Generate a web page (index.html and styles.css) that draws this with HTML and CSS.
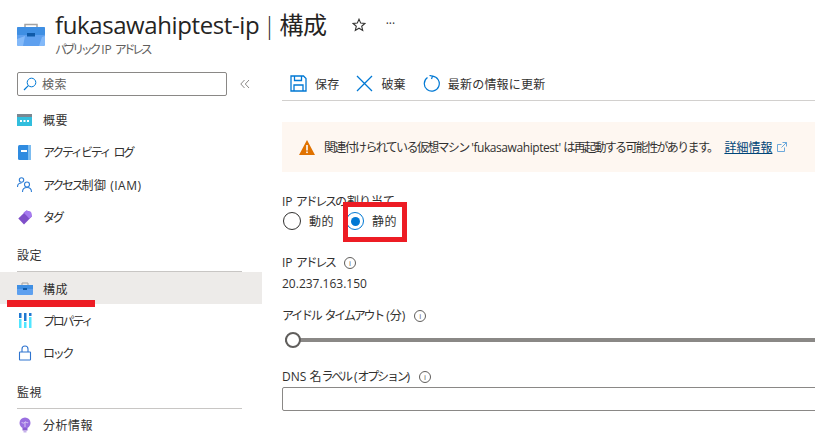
FILE: index.html
```html
<!DOCTYPE html>
<html lang="ja">
<head>
    <meta charset="UTF-8">
    <title>fukasawahiptest-ip | 構成</title>
    <link rel="stylesheet" href="styles.css">
</head>
<body>
    <header class="page-header">
        <svg class="header-icon" width="28" height="24" viewBox="0 0 28 24">
            <path d="M8 6V2.500h12V6" fill="none" stroke="#a3a3a3" stroke-width="1.500"/>
            <rect x="0" y="5" width="28" height="19" rx="1.500" fill="#5ea0ef"/>
            <rect x="0" y="5" width="28" height="8" rx="1" fill="#3f8fe3"/>
            <path d="M0 17l8-3-2 10H1.500L0 22.500zM22 24l3-9 3-1v8.500L26.500 24z" fill="#83b9f9"/>
            <rect x="10" y="11" width="8" height="3.500" fill="#0f5aa8"/>
        </svg>
        <div>
            <h1 class="page-title">fukasawahiptest-ip <span class="title-sep">|</span> <span class="title-jp">構成</span></h1>
            <div class="page-sub"><span class="kana-tight">パブリック</span> IP <span class="kana-tight">アドレス</span></div>
        </div>
        <svg class="star" width="14" height="14" viewBox="0 0 14 14"><path d="M7 1.200l1.700 3.900 4.200.4-3.200 2.800 1 4.100L7 10.200l-3.700 2.200 1-4.100L1.100 5.500l4.200-.4z" fill="none" stroke="#323130" stroke-width="1.100"/></svg>
        <span class="more">···</span>
    </header>

    <div class="layout">
        <nav class="sidebar">
            <div class="search-row">
                <div class="search-box">
                    <svg width="14" height="14" viewBox="0 0 14 14"><circle cx="8.500" cy="5.500" r="4.300" fill="none" stroke="#0078d4" stroke-width="1"/><path d="M5.300 8.700L1 13" stroke="#0078d4" stroke-width="1.200"/></svg>
                    <span>検索</span>
                </div>
                <svg class="collapse" width="10" height="10" viewBox="0 0 10 10"><path d="M4.500 1L.8 5l3.700 4M9 1L5.300 5 9 9" fill="none" stroke="#8a8886" stroke-width="1"/></svg>
            </div>

            <a class="nav-item">
                <svg width="16" height="14" viewBox="0 0 16 14"><rect y="1" width="15" height="12" fill="#32bedd"/><rect y="1" width="15" height="3" fill="#7a8791"/><rect x="3" y="7" width="2" height="2" fill="#fff"/><rect x="6.500" y="7" width="2" height="2" fill="#fff"/><rect x="10" y="7" width="2" height="2" fill="#fff"/></svg>
                <span>概要</span>
            </a>
            <a class="nav-item">
                <svg width="16" height="16" viewBox="0 0 16 16"><rect x="1" y="1" width="13" height="15" rx="1.500" fill="#2f8be0"/><rect x="11" y="1" width="3" height="15" fill="#7cbcf0"/><rect x="4" y="6" width="6" height="2" fill="#fff"/></svg>
                <span class="kana">アクティビティ ログ</span>
            </a>
            <a class="nav-item">
                <svg width="16" height="16" viewBox="0 0 16 16" fill="none" stroke="#2f7fd6" stroke-width="1.100"><circle cx="4.500" cy="3" r="2.200"/><path d="M.5 10c0-3 1.500-4 4-4"/><circle cx="10" cy="7.500" r="2.500"/><path d="M5.500 15c0-3 2-4.500 4.500-4.500s4.500 1.500 4.500 4.500"/></svg>
                <span><span class="kana">アクセス</span>制御 (IAM)</span>
            </a>
            <a class="nav-item">
                <svg width="15" height="15" viewBox="0 0 15 15"><path d="M9 .5l4.500 1.500.8 4.500L6.500 14.500.8 8.500z" fill="#7f4fc9"/><path d="M9 .5l4.500 1.500.8 4.500-2.300 2.300L6 2.500z" fill="#a67af0"/></svg>
                <span class="kana">タグ</span>
            </a>

            <div class="nav-heading">設定</div>
            <a class="nav-item nav-active">
                <svg width="16" height="13" viewBox="0 0 16 13"><path d="M5 3V1h6v2" fill="none" stroke="#a3a3a3"/><rect y="3" width="16" height="10" rx="1" fill="#5ea0ef"/><rect y="3" width="16" height="4" fill="#3f8fe3"/><rect x="6" y="6" width="4" height="2" fill="#0f5aa8"/></svg>
                <span>構成</span>
            </a>
            <a class="nav-item">
                <svg width="14" height="15" viewBox="0 0 14 15"><rect x="1" width="2.500" height="5" fill="#1f78d1"/><rect x="1" y="6" width="2.500" height="9" fill="#50e6ff"/><rect x="6" width="2.500" height="8" fill="#1f78d1"/><rect x="6" y="9" width="2.500" height="6" fill="#50e6ff"/><rect x="11" width="2.500" height="3" fill="#1f78d1"/><rect x="11" y="4" width="2.500" height="11" fill="#50e6ff"/></svg>
                <span class="kana">プロパティ</span>
            </a>
            <a class="nav-item">
                <svg width="14" height="16" viewBox="0 0 14 16" fill="none" stroke="#2f74cf" stroke-width="1.100"><rect x="1.500" y="7" width="11" height="8" rx=".500"/><path d="M4 7V4a3 3 0 0 1 6 0v3"/></svg>
                <span class="kana">ロック</span>
            </a>

            <div class="nav-heading nav-heading-next">監視</div>
            <a class="nav-item">
                <svg width="14" height="16" viewBox="0 0 14 16"><circle cx="7" cy="6" r="5.500" fill="#9a6fe0"/><rect x="4.500" y="11" width="5" height="2.500" fill="#8a5fd0"/><rect x="5.500" y="14" width="3" height="1.500" fill="#c6b1ea"/><path d="M4 5c0 2 3 1 3 0s3 2 3 0M7 5v5" fill="none" stroke="#e6dcf8" stroke-width=".800"/></svg>
                <span>分析情報</span>
            </a>
            <div class="mark-line"></div>
        </nav>

        <main class="content">
            <div class="toolbar">
                <button class="tool">
                    <svg width="17" height="17" viewBox="0 0 17 17" fill="none" stroke="#0078d4" stroke-width="1.300"><path d="M1 1h12.500L16 3.500V16H1z"/><path d="M4.500 1v4.500h7V1M4 16v-6h9v6"/></svg>
                    保存
                </button>
                <button class="tool">
                    <svg width="17" height="17" viewBox="0 0 17 17"><path d="M1 1l15 15M16 1L1 16" stroke="#0078d4" stroke-width="1.300"/></svg>
                    破棄
                </button>
                <button class="tool">
                    <svg width="17" height="17" viewBox="0 0 17 17" fill="none" stroke="#0078d4" stroke-width="1.200"><path d="M4.500 2.500A7.500 7.500 0 1 0 9.500 1.200"/><path d="M6.500.4l3 .8-1 2.800"/></svg>
                    最新の情報に更新
                </button>
            </div>

            <div class="alert">
                <svg width="16" height="15" viewBox="0 0 16 15"><path d="M8 0l8 15H0z" fill="#e07200"/><rect x="7.200" y="5" width="1.600" height="5.500" fill="#fff"/><rect x="7.200" y="11.500" width="1.600" height="1.600" fill="#fff"/></svg>
                <span class="alert-text"><span class="alert-jp">関連付けられている仮想マシン</span> 'fukasawahiptest' <span class="alert-jp">は再起動する可能性があります。</span></span>
                <a class="alert-link">詳細情報</a>
                <svg width="10" height="10" viewBox="0 0 10 10" fill="none" stroke="#5c9fd8" stroke-width=".900"><path d="M7.500 5.500v4h-7v-7h4M5.500.500h4v4M9.500.500L4.500 5.500"/></svg>
            </div>

            <div class="field-label assign-label"><span>IP <span class="kana">アドレス</span>の割り当て</span></div>
            <div class="radios">
                <label class="radio"><span class="radio-circle"></span>動的</label>
                <label class="radio"><span class="radio-circle radio-on"></span>静的</label>
            </div>
            <div class="mark-box"></div>

            <div class="field-label ip-label"><span>IP <span class="kana">アドレス</span></span> <span class="info">i</span></div>
            <div class="ip-value">20.237.163.150</div>

            <div class="field-label timeout-label"><span><span class="kana">アイドル タイムアウト</span> (分)</span> <span class="info">i</span></div>
            <div class="slider"><span class="thumb"></span></div>

            <div class="field-label dns-label"><span>DNS 名<span class="kana">ラベル</span> (<span class="kana">オプション</span>)</span> <span class="info">i</span></div>
            <div class="text-input"></div>
        </main>
    </div>
</body>
</html>
```

FILE: styles.css
```css
* {
    box-sizing: border-box;
}

html, body {
    height: 436px;
    overflow: hidden;
}

body {
    margin: 0;
    background-color: #fff;
    color: #323130;
    font-family: "Open Sans", "Noto Sans CJK JP", sans-serif;
    font-size: 12px;
}

svg {
    display: block;
    flex-shrink: 0;
}

.kana {
    letter-spacing: -2.2px;
    word-spacing: 3px;
}

.kana-tight {
    letter-spacing: -3.4px;
}

.page-header {
    display: flex;
    align-items: flex-start;
    height: 70px;
    padding: 12px 0 0 17px;
}

.header-icon {
    margin: 10px 10px 0 0;
}

.page-title {
    margin: 0;
    color: #252423;
    font-size: 24px;
    font-weight: 500;
    line-height: 26px;
    white-space: nowrap;
    letter-spacing: -0.4px;
    word-spacing: -2px;
}

.title-sep {
    font-weight: 300;
}

.title-jp {
    font-weight: 400;
}

.page-sub {
    margin-top: 4px;
    font-size: 12px;
    line-height: 16px;
    color: #605e5c;
}

.star {
    margin: 6px 0 0 25px;
}

.more {
    margin: 2px 0 0 20px;
    font-size: 12px;
    line-height: 20px;
}

.layout {
    display: flex;
    height: 366px;
}

.sidebar {
    position: relative;
    width: 262px;
    flex-shrink: 0;
}

.search-row {
    display: flex;
    align-items: center;
    height: 34px;
    padding: 2px 0 8px 17px;
}

.search-box {
    display: flex;
    align-items: center;
    gap: 5px;
    width: 210px;
    height: 24px;
    padding-left: 5px;
    border: 1px solid #8a8886;
    border-radius: 2px;
    color: #605e5c;
    letter-spacing: 0.5px;
}

.collapse {
    margin-left: 13px;
}

.nav-item {
    display: flex;
    align-items: center;
    gap: 10px;
    height: 32.3px;
    padding-left: 17px;
    letter-spacing: 0.5px;
}

.nav-item svg {
    width: 16px;
}

.nav-active {
    padding-top: 1px;
    background-color: #edebe9;
}

.nav-heading {
    width: 225px;
    height: 32px;
    margin: 7px 0 0 17px;
    padding-top: 7px;
    line-height: 18px;
    border-bottom: 1px solid #c8c6c4;
    letter-spacing: 0.5px;
}

.nav-heading-next {
    margin-top: 8px;
}

.mark-line {
    position: absolute;
    left: 7px;
    top: 230px;
    width: 88px;
    height: 7px;
    background-color: #ed1c24;
}

.content {
    position: relative;
    flex: 1;
    min-width: 0;
    overflow: hidden;
    padding-left: 20px;
}

.toolbar {
    display: flex;
    align-items: center;
    gap: 17px;
    height: 31px;
    padding: 0 0 3px 8px;
    border-bottom: 1px solid #d2d0ce;
}

.tool {
    display: flex;
    align-items: center;
    gap: 8px;
    padding: 0;
    border: none;
    background: none;
    color: #323130;
    font: inherit;
    letter-spacing: 0.2px;
}

.alert {
    display: flex;
    align-items: center;
    height: 50px;
    margin-top: 21px;
    padding: 0 0 0 17px;
    background-color: #fef7f1;
}

.alert-text {
    margin-left: 9px;
    letter-spacing: -0.43px;
    white-space: nowrap;
}

.alert-jp {
    letter-spacing: -1.65px;
}

.alert-link {
    margin-left: 7px;
    margin-right: 5px;
    color: #004578;
    text-decoration: underline;
    white-space: nowrap;
}

.field-label {
    display: flex;
    align-items: center;
    gap: 9px;
    line-height: 16px;
    white-space: nowrap;
}

.assign-label {
    margin-top: 22px;
}

.radios {
    display: flex;
    gap: 11px;
    height: 20px;
    margin-top: 1px;
}

.radio {
    display: flex;
    align-items: center;
    gap: 8px;
    padding-left: 1px;
    letter-spacing: 0.5px;
}

.radio-circle {
    width: 18px;
    height: 18px;
    border: 1px solid #323130;
    border-radius: 50%;
}

.radio-on {
    display: flex;
    align-items: center;
    justify-content: center;
    border-color: #0078d4;
}

.radio-on::after {
    content: "";
    width: 9px;
    height: 9px;
    border-radius: 50%;
    background-color: #0078d4;
}

.mark-box {
    position: absolute;
    left: 81px;
    top: 132px;
    width: 64px;
    height: 40px;
    border: 5px solid #ed1c24;
}

.ip-label {
    margin-top: 24px;
}

.info {
    display: inline-flex;
    align-items: center;
    justify-content: center;
    width: 12px;
    height: 12px;
    border: 1px solid #605e5c;
    border-radius: 50%;
    color: #605e5c;
    font-size: 8px;
    line-height: 1;
}

.ip-value {
    margin-top: 5px;
    line-height: 16px;
}

.timeout-label {
    margin-top: 16px;
}

.slider {
    position: relative;
    height: 4px;
    margin: 14px -10px 0 3px;
    background-color: #8a8886;
}

.thumb {
    position: absolute;
    left: 0;
    top: -6px;
    width: 16px;
    height: 16px;
    border: 2px solid #605e5c;
    border-radius: 50%;
    background-color: #fff;
}

.dns-label {
    margin-top: 27px;
}

.text-input {
    height: 24px;
    margin: 2px -10px 0 0;
    border: 1px solid #8a8886;
    border-radius: 2px;
}
```
